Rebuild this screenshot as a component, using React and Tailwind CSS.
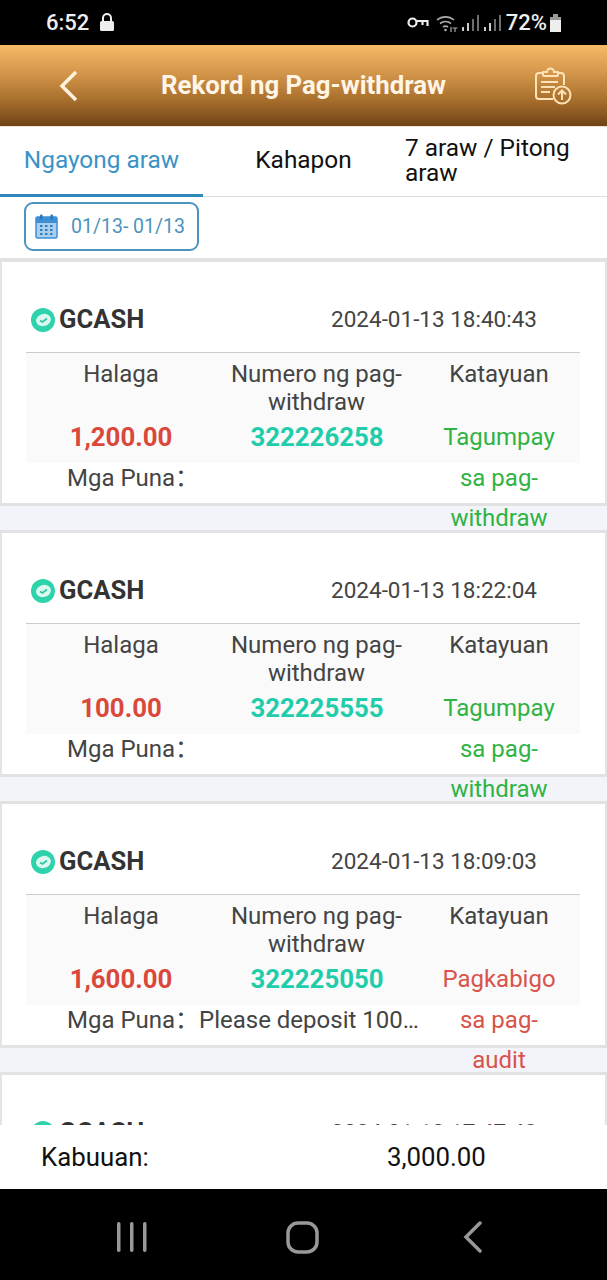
import React from 'react';

const records = [
  { amount: '1,200.00', time: '2024-01-13 18:40:43', no: '322226258', status: ['Tagumpay', 'sa pag-', 'withdraw'], ok: true, note: '' },
  { amount: '100.00', time: '2024-01-13 18:22:04', no: '322225555', status: ['Tagumpay', 'sa pag-', 'withdraw'], ok: true, note: '' },
  { amount: '1,600.00', time: '2024-01-13 18:09:03', no: '322225050', status: ['Pagkabigo', 'sa pag-', 'audit'], ok: false, note: 'Please deposit 1000 pesos to continue' },
  { amount: '800.00', time: '2024-01-13 17:47:48', no: '322224400', status: ['Tagumpay', 'sa pag-', 'withdraw'], ok: true, note: '' },
];

const StatusBar = () => (
  <div className="h-[45px] shrink-0 bg-black flex items-center pl-[46px] pr-[45px] text-[#eeeeee] font-medium">
    <span className="text-[22px] leading-none">6:52</span>
    <svg className="ml-[10px] mb-[2px]" width="16" height="20" viewBox="0 0 16 20">
      <path d="M4 9V6a4 4 0 0 1 8 0v3" fill="none" stroke="#eee" strokeWidth="2" />
      <rect x="1" y="9" width="14" height="10" rx="1.5" fill="#eee" />
    </svg>
    <div className="flex-1" />
    <svg width="22" height="14" viewBox="0 0 22 14" fill="none" stroke="#eee" strokeWidth="2.200">
      <circle cx="5.5" cy="6.500" r="4" />
      <path d="M9.500 5H20.500V10M15.500 5V9" />
    </svg>
    <svg className="ml-[7px]" width="24" height="20" viewBox="0 0 24 20" fill="none" stroke="#aaa" strokeWidth="1.600">
      <path d="M1 7a13 13 0 0 1 17 0M4 10.500a9 9 0 0 1 11 0M7 14a4.500 4.500 0 0 1 5 0" />
      <circle cx="9.500" cy="17" r="1.300" fill="#aaa" stroke="none" />
      <path d="M15 14v5M19 15v4M21.500 15h-5" strokeWidth="1.200" />
    </svg>
    <svg className="ml-[1px]" width="19" height="18" viewBox="0 0 19 18" fill="#6e6e6e">
      <rect x="1" y="13" width="2" height="4" fill="#ccc" />
      <rect x="6" y="9" width="2" height="8" fill="#ccc" />
      <rect x="11" y="5" width="2" height="12" />
      <rect x="16" y="1" width="2" height="16" />
    </svg>
    <svg className="ml-[3px]" width="19" height="18" viewBox="0 0 19 18" fill="#6e6e6e">
      <rect x="1" y="13" width="2" height="4" fill="#ccc" />
      <rect x="6" y="9" width="2" height="8" fill="#ccc" />
      <rect x="11" y="5" width="2" height="12" />
      <rect x="16" y="1" width="2" height="16" />
    </svg>
    <span className="ml-[4px] text-[22px] leading-none">72%</span>
    <svg className="ml-[2px]" width="13" height="20" viewBox="0 0 13 20" fill="#eee">
      <rect x="4" y="1" width="5" height="3" fill="#999" />
      <rect x="1" y="4" width="11" height="3" fill="#999" />
      <rect x="1" y="7" width="11" height="12" />
    </svg>
  </div>
);

const Header = () => (
  <div className="h-[82px] shrink-0 flex items-center border-b border-[#f0e4d4] bg-[linear-gradient(180deg,#f6ba68_0%,#d3954a_35%,#a86f2c_68%,#6f4317_100%)]">
    <div className="w-[161px] pl-[58px]">
      <svg width="22" height="34" viewBox="0 0 22 34" fill="none" stroke="#fff3df" strokeWidth="3.500">
        <path d="M18 3L4 17L18 31" />
      </svg>
    </div>
    <span className="text-[25.800px] font-bold text-[#fff5e6] leading-none">Rekord ng Pag-withdraw</span>
    <div className="flex-1 flex justify-end pr-[35px]">
      <svg width="38" height="38" viewBox="0 0 38 38" fill="none" stroke="#ffe3b8" strokeWidth="2">
        <path d="M9 6H5a3 3 0 0 0-3 3v20a3 3 0 0 0 3 3h14M24 6h3a3 3 0 0 1 3 3v9" />
        <path d="M9 8V5h4a3.500 3.500 0 0 1 7 0h4v3a1 1 0 0 1-1 1H10a1 1 0 0 1-1-1z" />
        <path d="M7 15h17M7 20h14M7 25h9" />
        <circle cx="28" cy="28" r="8.500" />
        <path d="M28 33v-9M24 27.500l4-4 4 4" />
      </svg>
    </div>
  </div>
);

const Tabs = () => (
  <div className="h-[70px] shrink-0 grid grid-cols-[203px_201px_203px] border-b border-[#dddddd] text-[24.400px] leading-[25px] text-[#111111]">
    <div className="flex items-center justify-center text-[#3a93c6] border-b-[3px] border-[#2f88bb] -mb-px pb-[3px]">Ngayong araw</div>
    <div className="flex items-center justify-center pb-[5px]">Kahapon</div>
    <div className="flex items-center pl-px pb-[3px]">7 araw / Pitong araw</div>
  </div>
);

const DateRow = () => (
  <div className="h-[65px] shrink-0 pl-[24px] pt-[5px] border-b-[4px] border-[#e2e2e2] bg-white">
    <div className="w-[175px] h-[49px] border-2 border-[#4b95bd] rounded-[9px] flex items-center pl-[9px]">
      <svg width="23" height="25" viewBox="0 0 23 25">
        <rect x="1" y="3" width="21" height="21" rx="1.500" fill="#a9cfee" stroke="#3d8fd6" strokeWidth="1.500" />
        <rect x="1" y="3" width="21" height="6" fill="#3d8fd6" />
        <rect x="5" y="0.500" width="2.500" height="5" rx="1" fill="#2a75b8" />
        <rect x="15.500" y="0.500" width="2.500" height="5" rx="1" fill="#2a75b8" />
        <path d="M5 12h2.500M10 12h2.500M15 12h2.500M5 16h2.500M10 16h2.500M15 16h2.500M5 20h2.500M10 20h2.500M15 20h2.500" stroke="#2f7fc0" strokeWidth="2" />
      </svg>
      <span className="ml-[13px] text-[19.500px] text-[#4d93bd]">01/13- 01/13</span>
    </div>
  </div>
);

const GcashLogo = () => (
  <svg width="24" height="24" viewBox="0 0 24 24">
    <circle cx="12" cy="12" r="12" fill="#2ed3ab" />
    <ellipse cx="12.500" cy="12" rx="7.500" ry="6" fill="#dcf8f0" transform="rotate(-15 12.500 12)" />
    <path d="M9 12.500l2.500 1.500 4.500-3.500" fill="none" stroke="#2ec7a4" strokeWidth="1.800" />
  </svg>
);

const RecordCard = ({ item }) => {
  const statusColor = item.ok ? 'text-[#2fb344]' : 'text-[#d9534a]';
  return (
    <div className="h-[241px] bg-white border-x-2 border-[#e4e4e4] pl-[24px] pr-[25px] pt-[25px]">
      <div className="h-[66px] flex items-center border-b border-[#cccccc] text-[#333333]">
        <div className="ml-[5px]"><GcashLogo /></div>
        <span className="ml-[4px] text-[25.600px] font-bold leading-none">GCASH</span>
        <span className="ml-auto mr-[43px] text-[22.500px] leading-none text-[#444444]">{item.time}</span>
      </div>
      <div className="grid grid-cols-[190px_202px_162px] text-center text-[24px] text-[#444444]">
        <div className="col-span-3 grid grid-cols-subgrid bg-[#fafafa] pt-[7px] pb-[5px]">
          <div className="leading-[28px]">Halaga</div>
          <div className="leading-[28px] -ml-px">Numero ng pag-<br />withdraw</div>
          <div className="leading-[28px]">Katayuan</div>
          <div className="leading-[42px] text-[25.800px] font-bold text-[#d9483b]">{item.amount}</div>
          <div className="leading-[42px] text-[25.800px] font-bold text-[#1fcdaa]">{item.no}</div>
          <div className={`leading-[42px] ${statusColor}`}>{item.status[0]}</div>
        </div>
        <div className="col-span-2 flex leading-[40px] pl-[41px] text-left -mt-[5px]">
          <span className="shrink-0 w-[132px] whitespace-nowrap">Mga Puna：</span>
          <span className="shrink-0 truncate w-[224px]">{item.note}</span>
        </div>
        <div className={`leading-[40px] -mt-[5px] ${statusColor}`}>
          <div>{item.status[1]}</div>
          <div>{item.status[2]}</div>
        </div>
      </div>
    </div>
  );
};

const App = () => (
  <div
    className="w-[607px] h-[1280px] flex flex-col bg-white overflow-hidden"
    style={{ fontFamily: 'Roboto, "Noto Sans CJK SC", sans-serif' }}
  >
    <StatusBar />
    <Header />
    <Tabs />
    <DateRow />
    <div className="flex-1 min-h-0 overflow-hidden">
      {records.map((item) => (
        <React.Fragment key={item.time}>
          <RecordCard item={item} />
          <div className="h-[30px] bg-[#f3f4fa] border-y-[3px] border-[#e2e2e2]" />
        </React.Fragment>
      ))}
    </div>
    <div className="h-[64px] shrink-0 bg-white flex items-center pl-[41px] text-[25.800px] text-[#111111]">
      <span className="w-[346px]">Kabuuan:</span>
      <span>3,000.00</span>
    </div>
    <div className="h-[91px] shrink-0 bg-black flex items-center pt-[5px]">
      <div className="w-[117px]" />
      <svg width="30" height="30" viewBox="0 0 30 30" fill="#999">
        <rect x="0" y="0" width="3.500" height="30" rx="1.700" />
        <rect x="13" y="0" width="3.500" height="30" rx="1.700" />
        <rect x="26" y="0" width="3.500" height="30" rx="1.700" />
      </svg>
      <svg className="ml-[139px]" width="33" height="33" viewBox="0 0 33 33" fill="none" stroke="#999" strokeWidth="3.500">
        <rect x="2" y="2" width="29" height="29" rx="10" />
      </svg>
      <svg className="ml-[144px]" width="20" height="32" viewBox="0 0 20 32" fill="none" stroke="#999" strokeWidth="3.500" strokeLinecap="round">
        <path d="M17 2L3 16L17 30" />
      </svg>
    </div>
  </div>
);

export default App;
